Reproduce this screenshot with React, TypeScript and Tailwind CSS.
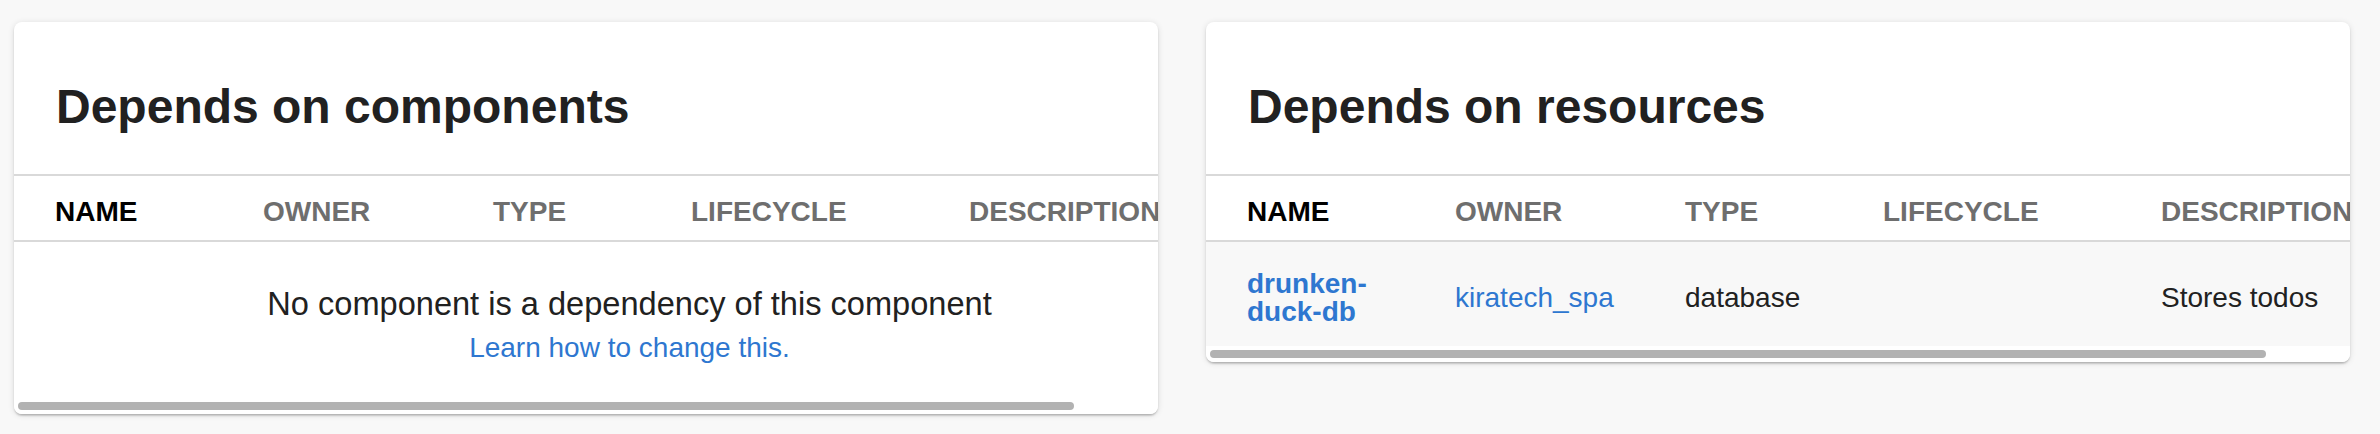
import React from "react";

const font = { fontFamily: '"Liberation Sans", Arial, sans-serif' };

function HeaderRow() {
  return (
    <div className="flex h-[68px] items-center border-y-2 border-[#d9d9d9] pl-[41px] pt-[7px] text-[28px] font-bold uppercase leading-[32px] text-[#6e6e6e]">
      <div className="w-[208px] shrink-0 text-black">Name</div>
      <div className="w-[230px] shrink-0">Owner</div>
      <div className="w-[198px] shrink-0">Type</div>
      <div className="w-[278px] shrink-0">Lifecycle</div>
      <div className="w-[276px] shrink-0">Description</div>
    </div>
  );
}

function Scrollbar() {
  return (
    <div className="flex h-[16px] items-center bg-white pl-[4px]">
      <div className="h-[8px] w-[1056px] rounded-full bg-[#b2b2b2]" />
    </div>
  );
}

function Card({ title, children }: { title: string; children: React.ReactNode }) {
  return (
    <div className="w-[1144px] shrink-0 overflow-hidden rounded-[8px] bg-white shadow-[0_2px_2px_rgba(0,0,0,0.12),0_3px_2px_-2px_rgba(0,0,0,0.14),0_1px_6px_rgba(0,0,0,0.12)]">
      <div className="h-[152px] pl-[42px] pt-[57px] text-[48px] font-bold leading-[56px] text-[#212121]">
        {title}
      </div>
      <div className="w-[1231px]">
        <HeaderRow />
        {children}
      </div>
      <Scrollbar />
    </div>
  );
}

export default function App() {
  return (
    <div className="flex min-h-[434px] w-[2380px] items-start gap-[48px] bg-[#f8f8f8] pl-[14px] pr-[30px] pt-[22px]" style={font}>
      <Card title="Depends on components">
        <div className="flex h-[156px] flex-col items-center pt-[42px]">
          <div className="text-[32.6px] leading-[40px] text-[#212121]">
            No component is a dependency of this component
          </div>
          <a className="text-[28px] leading-[48px] text-[#2e77d0]" href="#">
            Learn how to change this.
          </a>
        </div>
      </Card>
      <Card title="Depends on resources">
        <div className="flex h-[104px] items-center bg-[#f8f8f8] pl-[41px] pt-[8px] text-[28px] leading-[40px] text-[#212121]">
          <div className="w-[208px] shrink-0 pr-[32px]">
            <a href="#" className="block font-bold leading-[28px] text-[#2e77d0]">
              drunken-duck-db
            </a>
          </div>
          <div className="w-[230px] shrink-0">
            <a href="#" className="text-[#2e77d0]">kiratech_spa</a>
          </div>
          <div className="w-[198px] shrink-0">database</div>
          <div className="w-[278px] shrink-0" />
          <div className="w-[276px] shrink-0">Stores todos</div>
        </div>
      </Card>
    </div>
  );
}
